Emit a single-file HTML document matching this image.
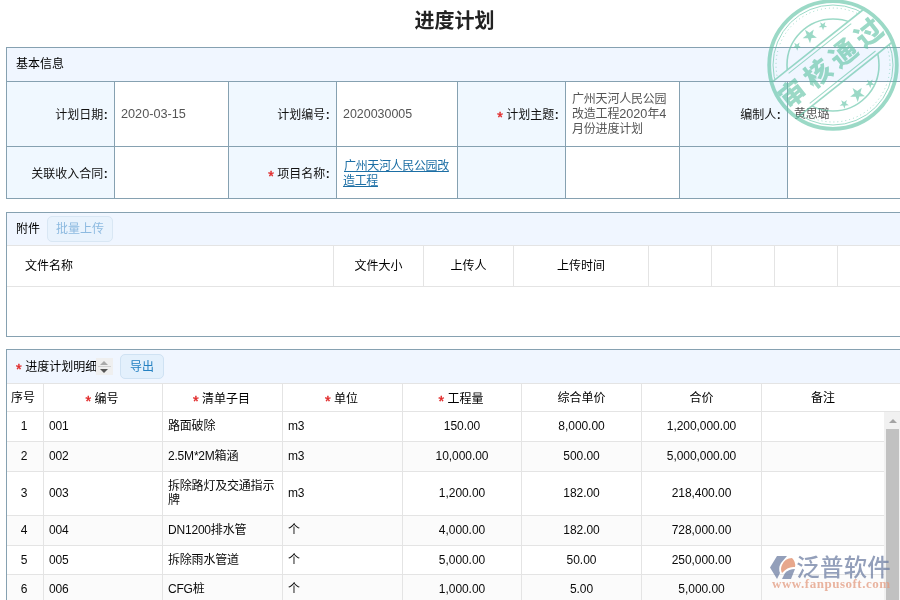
<!DOCTYPE html>
<html lang="zh-CN">
<head>
<meta charset="utf-8">
<title>进度计划</title>
<style>
html,body{margin:0;padding:0;background:#fff;}
body{width:900px;height:600px;overflow:hidden;position:relative;font-family:"Liberation Sans","Noto Sans CJK SC",sans-serif;font-size:12px;color:#333;font-weight:400;}
h1{position:absolute;left:0;top:9px;width:909px;margin:0;text-align:center;font-size:20px;line-height:24px;font-weight:bold;color:#222;}
#root{position:absolute;left:0;top:0;width:900px;height:600px;overflow:hidden;will-change:transform;}
.panel{position:absolute;left:6px;width:900px;border:1px solid #86a1b1;box-sizing:border-box;background:#fff;}
.phead{background:#f0f6ff;box-sizing:border-box;padding-left:9px;color:#000;position:relative;}
table{border-collapse:separate;border-spacing:0;table-layout:fixed;}
td,th{box-sizing:border-box;padding:0;font-weight:inherit;}
/* form */
#form{width:899px;}
#form td{border-top:1px solid #86a1b1;border-right:1px solid #86a1b1;vertical-align:middle;line-height:16px;padding-top:1px;}
.n{font-size:12.7px;}
#form tr.r2 td{padding-top:3px;}
#form td.l b{font-weight:bold;margin-left:0.5px;}
#form td.l{background:#f0f8ff;text-align:right;padding-right:6.2px;color:#111;}
#form td.v{background:#fff;padding-left:6px;padding-right:2px;color:#555;line-height:15px;letter-spacing:-0.2px;}
#form td.v .n{letter-spacing:0;}
.req{color:#e02424;font-size:14.5px;font-weight:normal;line-height:0;display:inline-block;position:relative;top:3px;margin-right:3.5px;-webkit-text-stroke:0.4px #e02424;}
a{color:#1d6fa5;text-decoration:underline;letter-spacing:-0.35px;margin-left:1px;}
/* grid */
.grid td,.grid th{border-right:1px solid #e4e4e4;border-bottom:1px solid #e4e4e4;color:#0a0a0a;padding-bottom:2px;}
.grid td{letter-spacing:-0.2px;}
.grid th{font-weight:400;color:#000;padding-bottom:3px;}
.grid th.r{font-weight:400;color:#000;padding-bottom:1px;padding-right:2px;}
.grid tr.low td{padding-bottom:0.5px;}
.grid td.c{text-align:center;letter-spacing:-0.05px;}
.grid td.c:first-child{padding-right:2px;}
.grid td.t{text-align:left;padding-left:5px;line-height:14px;}
.grid tr.alt td{background:#fbfbfb;}
.btn{position:absolute;box-sizing:border-box;border:1px solid #cfe2f3;background:#e3f0fc;border-radius:5px;text-align:center;}
.sort{position:absolute;left:89px;top:8px;width:17px;height:17px;background:#efefef;}
.sort i{position:absolute;display:block;}
.sort .u{left:4px;top:3px;border-left:4px solid transparent;border-right:4px solid transparent;border-bottom:4px solid #aaa;}
.sort .m{left:2px;top:8px;width:13px;height:1px;background:#d0d0d0;}
.sort .d{left:4px;top:11px;border-left:4px solid transparent;border-right:4px solid transparent;border-top:4px solid #555;}
</style>
</head>
<body>
<div id="root">
<h1>进度计划</h1>

<div class="panel" style="top:47px;height:152px;">
  <div class="phead" style="height:33px;line-height:33px;">基本信息</div>
  <table id="form">
  <colgroup><col style="width:108px"><col style="width:114px"><col style="width:108px"><col style="width:121px"><col style="width:108px"><col style="width:114px"><col style="width:108px"><col style="width:118px"></colgroup>
  <tr style="height:65px">
  <td class="l">计划日期<b>:</b></td><td class="v"><span class="n">2020-03-15</span></td>
  <td class="l">计划编号<b>:</b></td><td class="v"><span class="n" style="font-size:12.45px">2020030005</span></td>
  <td class="l"><span class="req">*</span>计划主题<b>:</b></td><td class="v">广州天河人民公园改造工程<span class="n">2020</span>年<span class="n">4</span>月份进度计划</td>
  <td class="l">编制人<b>:</b></td><td class="v">黄思璐</td>
  </tr>
  <tr style="height:52px" class="r2">
  <td class="l">关联收入合同<b>:</b></td><td class="v"></td>
  <td class="l"><span class="req">*</span>项目名称<b>:</b></td><td class="v"><a>广州天河人民公园改造工程</a></td>
  <td class="l"></td><td class="v"></td>
  <td class="l"></td><td class="v"></td>
  </tr>
  </table>
</div>

<div class="panel" style="top:212px;height:125px;">
  <div class="phead" style="height:32px;line-height:33px;">附件<span class="btn" style="left:40px;top:3px;width:66px;height:26px;line-height:25px;color:#8dbae0;background:#e9f3fd;border-color:#d9e7f4;">批量上传</span></div>
  <table class="grid" style="width:900px;border-top:1px solid #e4e4e4;">
  <colgroup><col style="width:327px"><col style="width:90px"><col style="width:90px"><col style="width:135px"><col style="width:63px"><col style="width:63px"><col style="width:63px"><col style="width:69px"></colgroup>
  <tr style="height:41px"><th style="text-align:left;padding-left:18px;">文件名称</th><th>文件大小</th><th>上传人</th><th>上传时间</th><th></th><th></th><th></th><th></th></tr>
  </table>
</div>

<div class="panel" style="top:349px;height:300px;">
  <div class="phead" style="height:33px;line-height:34px;"><span class="req" style="top:3.2px">*</span>进度计划明细<span class="sort"><i class="u"></i><i class="m"></i><i class="d"></i></span><span class="btn" style="left:113px;top:4px;width:44px;height:25px;line-height:24px;color:#2481c2;">导出</span></div>
  <table class="grid" style="width:900px;border-top:1px solid #e4e4e4;">
  <colgroup><col style="width:37px"><col style="width:119px"><col style="width:120px"><col style="width:120px"><col style="width:119px"><col style="width:120px"><col style="width:120px"><col style="width:145px"></colgroup>
  <tr style="height:28px"><th style="padding-right:4px">序号</th><th class="r"><span class="req">*</span>编号</th><th class="r"><span class="req">*</span>清单子目</th><th class="r"><span class="req">*</span>单位</th><th class="r"><span class="req">*</span>工程量</th><th>综合单价</th><th>合价</th><th style="padding-right:22px">备注</th></tr>
  <tr style="height:30px"><td class="c">1</td><td class="t">001</td><td class="t">路面破除</td><td class="t">m3</td><td class="c">150.00</td><td class="c">8,000.00</td><td class="c">1,200,000.00</td><td></td></tr>
  <tr style="height:30px" class="alt"><td class="c">2</td><td class="t">002</td><td class="t">2.5M*2M箱涵</td><td class="t">m3</td><td class="c">10,000.00</td><td class="c">500.00</td><td class="c">5,000,000.00</td><td></td></tr>
  <tr style="height:44px" class="low"><td class="c">3</td><td class="t">003</td><td class="t">拆除路灯及交通指示牌</td><td class="t">m3</td><td class="c">1,200.00</td><td class="c">182.00</td><td class="c">218,400.00</td><td></td></tr>
  <tr style="height:30px" class="alt"><td class="c">4</td><td class="t">004</td><td class="t">DN1200排水管</td><td class="t">个</td><td class="c">4,000.00</td><td class="c">182.00</td><td class="c">728,000.00</td><td></td></tr>
  <tr style="height:29px" class="low"><td class="c">5</td><td class="t">005</td><td class="t">拆除雨水管道</td><td class="t">个</td><td class="c">5,000.00</td><td class="c">50.00</td><td class="c">250,000.00</td><td></td></tr>
  <tr style="height:30px" class="alt low"><td class="c">6</td><td class="t">006</td><td class="t">CFG桩</td><td class="t">个</td><td class="c">1,000.00</td><td class="c">5.00</td><td class="c">5,000.00</td><td></td></tr>
  </table>
</div>

<!-- vertical scrollbar -->
<div style="position:absolute;left:884px;top:412px;width:17px;height:200px;background:#f1f1f1;">
  <div style="position:absolute;left:5px;top:7px;width:0;height:0;border-left:4px solid transparent;border-right:4px solid transparent;border-bottom:4px solid #a3a3a3;"></div>
  <div style="position:absolute;left:2px;top:17px;width:13px;height:190px;background:#c1c1c1;"></div>
</div>

<!-- approval stamp -->
<svg id="stamp" style="position:absolute;left:763.3px;top:-5.5px;opacity:0.62;" width="140" height="140" viewBox="-70 -70 140 140">
  <defs>
    <mask id="bandmask"><rect x="-70" y="-70" width="140" height="140" fill="#fff"/><rect x="-70" y="-24.5" width="140" height="43.5" fill="#000" transform="rotate(-38.5)"/></mask>
    <clipPath id="outerclip"><circle r="64"/></clipPath>
  </defs>
  <g fill="none" stroke="#5ec2a4">
    <circle r="63.8" stroke-width="3.8"/>
    <g mask="url(#bandmask)">
      <circle r="60" stroke-width="1"/>
      <circle r="57" stroke-width="1" stroke-dasharray="1 3"/>
      <circle r="46" stroke-width="1.6"/>
    </g>
    <g clip-path="url(#outerclip)"><g transform="rotate(-38.5)" stroke-width="1.6">
      <line x1="-70" y1="-24.5" x2="70" y2="-24.5"/>
      <line x1="-70" y1="19" x2="70" y2="19"/>
      <line x1="-40" y1="-21" x2="40" y2="-21" stroke-width="1"/>
      <line x1="-42" y1="15.5" x2="42" y2="15.5" stroke-width="1"/>
    </g></g>
  </g>
  <g transform="rotate(-38.5)" fill="#5ec2a4">
    <polygon points="-16.5,-41.5 -15.4,-38.5 -12.2,-38.4 -14.8,-36.4 -13.9,-33.4 -16.5,-35.2 -19.1,-33.4 -18.2,-36.4 -20.8,-38.4 -17.6,-38.5"/><polygon points="0.0,-45.0 1.8,-39.9 7.1,-39.8 2.9,-36.6 4.4,-31.4 0.0,-34.5 -4.4,-31.4 -2.9,-36.6 -7.1,-39.8 -1.8,-39.9"/><polygon points="16.5,-41.5 17.6,-38.5 20.8,-38.4 18.2,-36.4 19.1,-33.4 16.5,-35.2 13.9,-33.4 14.8,-36.4 12.2,-38.4 15.4,-38.5"/><polygon points="-15.5,32.7 -14.4,35.9 -10.9,36.0 -13.7,38.1 -12.7,41.4 -15.5,39.4 -18.3,41.4 -17.3,38.1 -20.1,36.0 -16.6,35.9"/><polygon points="1.0,30.2 2.8,35.5 8.4,35.6 4.0,39.0 5.6,44.3 1.0,41.1 -3.6,44.3 -2.0,39.0 -6.4,35.6 -0.8,35.5"/><polygon points="17.5,32.7 18.6,35.9 22.1,36.0 19.3,38.1 20.3,41.4 17.5,39.4 14.7,41.4 15.7,38.1 12.9,36.0 16.4,35.9"/>
    <text x="2" y="7" text-anchor="middle" font-family="'Liberation Sans','Noto Sans CJK SC',sans-serif" font-weight="900" font-size="27" letter-spacing="5.5">审核通过</text>
  </g>
</svg>

<!-- watermark logo -->
<div id="logo" style="position:absolute;left:768px;top:552px;width:132px;height:48px;opacity:0.75;">
  <svg style="position:absolute;left:2px;top:4px;" width="27" height="24" viewBox="0 0 27 24">
    <path d="M7 0 L17 0 L11 7 Q8 12 10 17 L7 23 L0 11.5 Z" fill="#6f7fa3"/>
    <path d="M12 9 Q15 2 22 2 Q26 6 25 11 Q18 10 12 17 Q10 13 12 9 Z" fill="#df8a66"/>
    <path d="M12 23 L15 17 Q19 13 25 13 L21 23 Z" fill="#6f7fa3"/>
  </svg>
  <div style="position:absolute;left:28.3px;top:0px;font-size:23.4px;line-height:32px;color:#6f7fa3;letter-spacing:0.3px;white-space:nowrap;font-weight:500;">泛普软件</div>
  <div style="position:absolute;left:4px;top:25px;font-family:'Liberation Serif','Noto Serif CJK SC',serif;font-weight:bold;font-size:13px;line-height:14px;letter-spacing:0.52px;color:#e39b80;white-space:nowrap;">www.fanpusoft.com</div>
</div>
</div>
</body>
</html>
